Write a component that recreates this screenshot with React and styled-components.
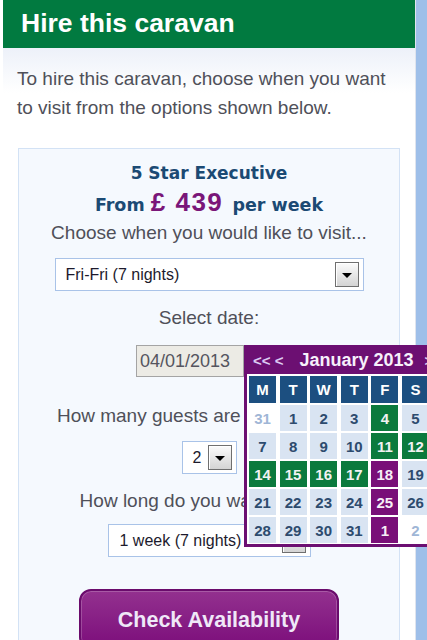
import styled, { createGlobalStyle } from 'styled-components';

const GlobalStyle = createGlobalStyle`
  html, body {
    margin: 0;
    padding: 0;
    overflow: hidden;
    background: #fff;
  }
  * {
    box-sizing: border-box;
  }
`;

const weeks = [
  [{ d: 31, t: 'out' }, { d: 1 }, { d: 2 }, { d: 3 }, { d: 4, t: 'free' }, { d: 5 }, { d: 6 }],
  [{ d: 7 }, { d: 8 }, { d: 9 }, { d: 10 }, { d: 11, t: 'free' }, { d: 12, t: 'free' }, { d: 13 }],
  [{ d: 14, t: 'free' }, { d: 15, t: 'free' }, { d: 16, t: 'free' }, { d: 17, t: 'free' }, { d: 18, t: 'booked' }, { d: 19 }, { d: 20 }],
  [{ d: 21 }, { d: 22 }, { d: 23 }, { d: 24 }, { d: 25, t: 'booked' }, { d: 26 }, { d: 27 }],
  [{ d: 28 }, { d: 29 }, { d: 30 }, { d: 31 }, { d: 1, t: 'booked' }, { d: 2, t: 'out' }, { d: 3, t: 'out' }],
];

const dayNames = ['M', 'T', 'W', 'T', 'F', 'S', 'S'];

const App = () => {
  return (
    <Page>
      <GlobalStyle />
      <Main>
        <Header>
          <Title>Hire this caravan</Title>
        </Header>
        <Panel>
          <Intro>To hire this caravan, choose when you want to visit from the options shown below.</Intro>
          <Box>
            <Name>5 Star Executive</Name>
            <Price>From <Amount>£ 439</Amount> per week</Price>
            <Label $mt={1}>Choose when you would like to visit...</Label>
            <Select $w={309} $mt={14}>
              Fri-Fri (7 nights)
              <Arrow />
            </Select>
            <Label $mt={16}>Select date:</Label>
            <DateRow>
              <DateInput>04/01/2013</DateInput>
              <Trigger />
              <Calendar>
                <CalTop>
                  <Nav>&lt;&lt; &lt;</Nav>
                  <Month>January 2013</Month>
                  <Nav $ml={11}>&gt; &gt;&gt;</Nav>
                </CalTop>
                <Grid>
                  {dayNames.map((n, i) => (
                    <DayName key={'n' + i}>{n}</DayName>
                  ))}
                  {weeks.flat().map((c, i) => (
                    <Day key={i} $type={c.t}>{c.d}</Day>
                  ))}
                </Grid>
              </Calendar>
            </DateRow>
            <Label $mt={28}>How many guests are in your party?</Label>
            <Select $w={55} $mt={14}>
              2
              <Arrow />
            </Select>
            <Label $mt={16}>How long do you want to stay?</Label>
            <Select $w={203} $mt={12} $pl={11}>
              1 week (7 nights)
              <Arrow />
            </Select>
            <CheckButton>Check Availability</CheckButton>
          </Box>
        </Panel>
      </Main>
      <Strip />
    </Page>
  );
};

const Page = styled.div`
  display: flex;
  width: 100vw;
  height: 100vh;
  padding-left: 3px;
  overflow: hidden;
  font-family: "Liberation Sans", Arial, sans-serif;
`;

const Main = styled.div`
  width: 413px;
  flex-shrink: 0;
  display: flex;
  flex-direction: column;
  border-right: 1px solid #dfe4ee;
`;

const Header = styled.div`
  height: 48px;
  flex-shrink: 0;
  background: #017a40;
  display: flex;
  align-items: center;
  padding: 0 0 2px 18px;
`;

const Title = styled.h1`
  margin: 0;
  font-size: 26.5px;
  font-weight: 700;
  color: #fff;
`;

const Panel = styled.div`
  flex: 1 0 auto;
  display: flex;
  flex-direction: column;
  padding: 16px 15px 0 14px;
  background: linear-gradient(#edf1f9, #ffffff 45px);
`;

const Intro = styled.p`
  margin: 0;
  flex-shrink: 0;
  max-width: 380px;
  font-size: 19px;
  line-height: 29px;
  color: #4f5059;
`;

const Box = styled.div`
  flex: 1 0 auto;
  margin: 26px 0 0 1px;
  width: 382px;
  border: 1px solid #d3e2f5;
  border-bottom: none;
  background: #f5f9fe;
  display: flex;
  flex-direction: column;
  align-items: center;
  padding-top: 13px;
`;

const Name = styled.div`
  font-family: "DejaVu Sans", Verdana, sans-serif;
  font-weight: 700;
  font-size: 17px;
  line-height: 22px;
  color: #1b4a74;
`;

const Price = styled.div`
  margin-top: 5px;
  font-family: "DejaVu Sans", Verdana, sans-serif;
  font-weight: 700;
  font-size: 17.5px;
  line-height: 32px;
  color: #1b4a74;
`;

const Amount = styled.span`
  font-family: "Liberation Sans", Arial, sans-serif;
  font-size: 26px;
  line-height: 1;
  letter-spacing: 1.5px;
  color: #7a1679;
  margin-right: 3px;
`;

const Label = styled.div`
  margin-top: ${(p) => p.$mt}px;
  font-size: 19px;
  line-height: 22px;
  color: #4f5059;
  white-space: nowrap;
`;

const Select = styled.div`
  margin-top: ${(p) => p.$mt}px;
  width: ${(p) => p.$w}px;
  height: 33px;
  flex-shrink: 0;
  display: flex;
  align-items: center;
  padding-left: ${(p) => p.$pl || 10}px;
  padding-right: 4px;
  background: #fff;
  border: 1px solid #a9c3e8;
  font-size: 16px;
  color: #1c1a2c;
  white-space: nowrap;
  overflow: hidden;
`;

const Arrow = styled.span`
  margin-left: auto;
  flex-shrink: 0;
  width: 24px;
  height: 25px;
  border: 1px solid #6f6f6f;
  background: linear-gradient(#fbfbfb, #d4d4d4);
  box-shadow: inset 1px 1px 0 #fff;
  display: flex;
  align-items: center;
  justify-content: center;
  padding-top: 2px;

  &::after {
    content: '';
    border-left: 5px solid transparent;
    border-right: 5px solid transparent;
    border-top: 5px solid #000;
  }
`;

const DateRow = styled.div`
  position: relative;
  margin-top: 16px;
  display: flex;
  flex-shrink: 0;
`;

const DateInput = styled.div`
  width: 108px;
  height: 32px;
  display: flex;
  align-items: center;
  padding-left: 3px;
  background: #ecebe5;
  border: 1px solid #a4a4a4;
  font-size: 18px;
  color: #55555f;
`;

const Trigger = styled.div`
  width: 38px;
  height: 32px;
`;

const Calendar = styled.div`
  position: absolute;
  left: 108px;
  top: 0;
  z-index: 5;
  background: #fff;
  border: 3px solid #6c0f72;
  border-top: none;
`;

const CalTop = styled.div`
  height: 29px;
  background: #6c0f72;
  display: flex;
  align-items: center;
  padding: 2px 0 0 6px;
  white-space: nowrap;
`;

const Nav = styled.span`
  margin-left: ${(p) => p.$ml || 0}px;
  font-size: 15px;
  font-weight: 700;
  color: #dccbf2;
`;

const Month = styled.span`
  margin-left: 16px;
  font-size: 18px;
  font-weight: 700;
  color: #f6f0fb;
`;

const Grid = styled.div`
  display: grid;
  grid-template-columns: repeat(7, 27px);
  grid-template-rows: 27px repeat(5, 26px);
  column-gap: 3.6px;
  row-gap: 2px;
  padding: 2px 2px 1px 2px;
`;

const DayName = styled.div`
  background: #1c4f80;
  color: #fff;
  font-size: 15px;
  font-weight: 700;
  display: flex;
  align-items: center;
  justify-content: center;
`;

const dayColors = {
  free: ['#0b7a3d', '#f2f2f2'],
  booked: ['#790f78', '#f6eef6'],
  out: ['#ffffff', '#9fb6d6'],
};

const Day = styled.div`
  background: ${(p) => (dayColors[p.$type] || ['#d9e4f2'])[0]};
  color: ${(p) => (dayColors[p.$type] || [null, '#2d4b6e'])[1]};
  font-size: 15px;
  font-weight: 700;
  display: flex;
  align-items: center;
  justify-content: center;
`;

const CheckButton = styled.button`
  margin-top: 32px;
  width: 260px;
  padding: 16px 0 14px;
  border: 2px solid #6a0b6c;
  border-radius: 12px;
  background: linear-gradient(#93318f, #7c0e7b);
  box-shadow: inset 0 0 0 1px rgba(255, 255, 255, 0.2);
  font-family: "Liberation Sans", Arial, sans-serif;
  font-size: 21.5px;
  line-height: 26px;
  font-weight: 700;
  color: #efe8f8;
  flex-shrink: 0;
`;

const Strip = styled.div`
  flex: 1;
  background: #9ebfe9;
`;

export default App;
